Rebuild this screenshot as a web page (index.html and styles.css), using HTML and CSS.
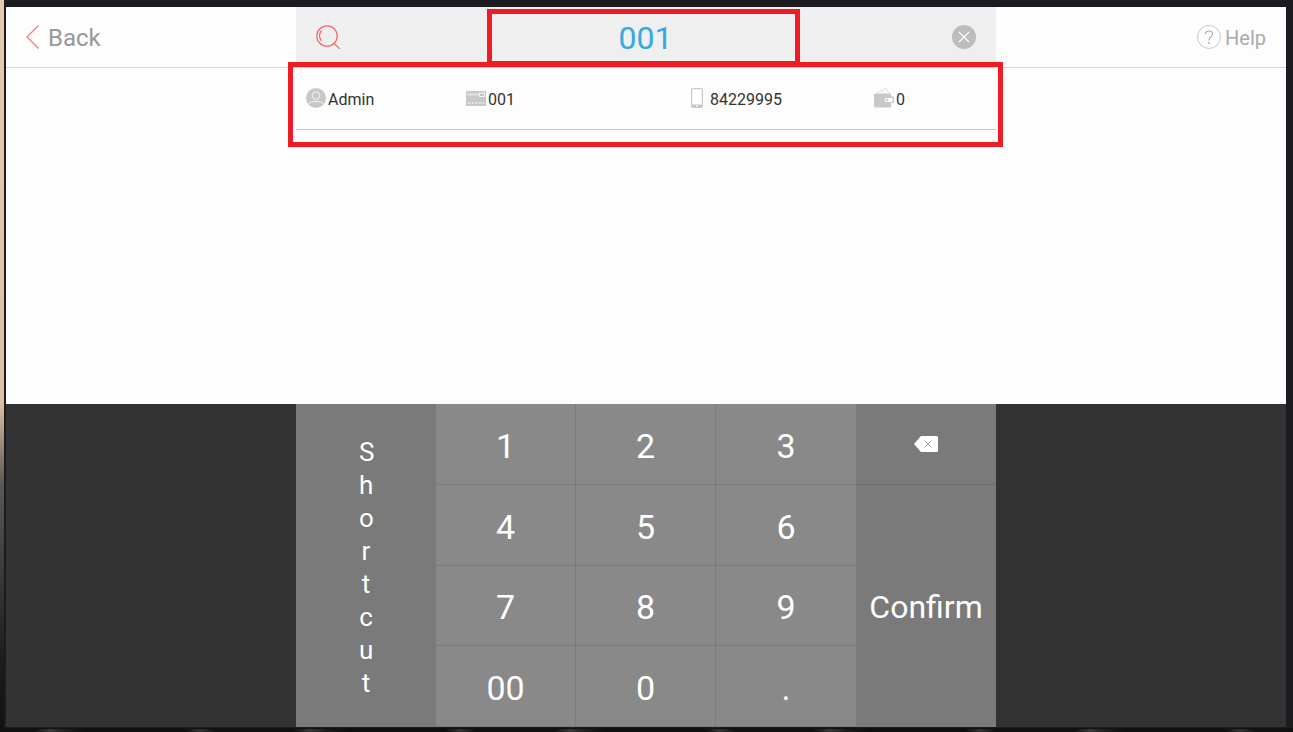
FILE: index.html
```html
<!DOCTYPE html>
<html lang="en">
<head>
    <meta charset="UTF-8">
    <title>Search Member</title>
    <link rel="stylesheet" href="styles.css">
</head>
<body>
    <div class="window">
        <header class="topbar">
            <a class="back">
                <svg class="back-icon" width="14" height="24" viewBox="0 0 14 24"><path d="M12.5 0.5 L1 12 L12.5 23.5" fill="none" stroke="#f4777b" stroke-width="1.2"/></svg>
                <span class="bar-label">Back</span>
            </a>
            <div class="search">
                <svg class="search-icon" width="24" height="24" viewBox="0 0 24 24" fill="none" stroke="#f4696e" stroke-width="1.2">
                    <circle cx="11" cy="11" r="10.2"/>
                    <path d="M5.5 5.5 A8 8 0 0 0 5.5 16"/>
                    <path d="M17.5 18 L24 24"/>
                </svg>
                <span class="search-value">001</span>
                <svg class="clear-icon" width="24" height="24" viewBox="0 0 24 24">
                    <circle cx="12" cy="12" r="12" fill="#bdbdbd"/>
                    <path d="M7 7 L17 17 M17 7 L7 17" stroke="#fff" stroke-width="1.1"/>
                </svg>
            </div>
            <a class="help">
                <svg width="24" height="24" viewBox="0 0 24 24" fill="none">
                    <circle cx="12" cy="12" r="11.5" stroke="#c8c8c8"/>
                    <path d="M8.5 9.2 C8.5 5 15.5 5 15.5 9.2 C15.5 12 12 12 12 15.5" stroke="#a8a8a8" stroke-width="1.1"/>
                    <circle cx="12" cy="18" r="0.9" fill="#a8a8a8"/>
                </svg>
                <span class="bar-label">Help</span>
            </a>
        </header>

        <main class="content">
            <div class="result">
                <div class="cell">
                    <svg width="20" height="20" viewBox="0 0 20 20">
                        <circle cx="10" cy="10" r="10" fill="#c8c8c8"/>
                        <circle cx="10" cy="7.6" r="3.8" fill="none" stroke="#f4f4f4" stroke-width="1"/>
                        <path d="M2.8 16.5 C4 12.2 16 12.2 17.2 16.5" fill="none" stroke="#f4f4f4" stroke-width="1"/>
                    </svg>
                    <span>Admin</span>
                </div>
                <div class="cell">
                    <svg width="20" height="15" viewBox="0 0 20 15">
                        <rect width="20" height="15" fill="#c8c8c8"/>
                        <path d="M1 3 H13 M1 4 H13" stroke="#f0f0f0" stroke-width="0.7"/>
                        <rect x="13.5" y="2" width="5" height="3.5" fill="none" stroke="#f4f4f4" stroke-width="0.9"/>
                        <path d="M2 12 H18" stroke="#fff" stroke-width="1" stroke-dasharray="2.2 1.4"/>
                    </svg>
                    <span>001</span>
                </div>
                <div class="cell cell-phone">
                    <svg width="12" height="20" viewBox="0 0 12 20">
                        <rect x="0.6" y="0.6" width="10.8" height="18.8" rx="1.5" fill="#fff" stroke="#c8c8c8" stroke-width="1.2"/>
                        <path d="M1 16.5 H11 V18 Q11 19.5 9.5 19.5 H2.5 Q1 19.5 1 18 Z" fill="#c8c8c8"/>
                        <path d="M5 18 H7" stroke="#fff"/>
                    </svg>
                    <span>84229995</span>
                </div>
                <div class="cell">
                    <svg width="20" height="20" viewBox="0 0 20 20">
                        <path d="M2 5.5 L12 0.5 L15 5" fill="none" stroke="#d0d0d0" stroke-width="0.7"/>
                        <path d="M1.5 5.5 H17 V8.5 H20 V15 H17 V19.5 H1.5 Q0 19.5 0 18 V7 Q0 5.5 1.5 5.5 Z" fill="#c8c8c8"/>
                        <rect x="10" y="9.5" width="9.5" height="5" rx="2.5" fill="#fff" stroke="#c8c8c8"/>
                        <circle cx="13" cy="12" r="1.2" fill="#c8c8c8"/>
                    </svg>
                    <span>0</span>
                </div>
            </div>
        </main>

        <section class="keyboard">
            <div class="keypad">
                <button class="key key-side key-shortcut"><span>Shortcut</span></button>
                <button class="key">1</button>
                <button class="key">2</button>
                <button class="key key-end">3</button>
                <button class="key key-side key-delete">
                    <svg width="24" height="16" viewBox="0 0 24 16">
                        <path d="M7 0 H22.5 Q24 0 24 1.5 V14.5 Q24 16 22.5 16 H7 L0 8 Z" fill="#fff"/>
                        <path d="M10.5 4.5 L17.5 11.5 M17.5 4.5 L10.5 11.5" stroke="#a0a0a0" stroke-width="1"/>
                    </svg>
                </button>
                <button class="key">4</button>
                <button class="key">5</button>
                <button class="key key-end">6</button>
                <button class="key key-side key-confirm">Confirm</button>
                <button class="key">7</button>
                <button class="key">8</button>
                <button class="key key-end">9</button>
                <button class="key">00</button>
                <button class="key">0</button>
                <button class="key key-end">.</button>
            </div>
        </section>

        <div class="mark mark-input"></div>
        <div class="mark mark-result"></div>
    </div>
</body>
</html>
```

FILE: styles.css
```css
*,
*::before,
*::after {
    box-sizing: border-box;
}
html, body {
    height: 100%;
}
body {
    margin: 0;
    overflow: hidden;
    padding-left: 4px;
    font-family: Roboto, "Liberation Sans", sans-serif;
    background:
        repeating-linear-gradient(90deg, #111 0 34px, #3a3a3a 50px, #1c1c1c 66px, #0d0d0d 90px 185px, #363636 200px, #111 215px 260px) left bottom / 100% 3px no-repeat,
        linear-gradient(180deg, #e6c9ad 0%, #dcbfa5 55%, #5d5853 66%, #1d1d1d 90%, #111 100%);
}
.window {
    position: relative;
    display: flex;
    flex-direction: column;
    width: 1289px;
    height: 728px;
    border-top: 7px solid #1c1b20;
    border-left: 2px solid #1c1b20;
    border-right: 7px solid #1c1b20;
    border-bottom: 1px solid #1c1b20;
    background-color: #fdfdfd;
}

/* top bar */
.topbar {
    display: flex;
    align-items: flex-start;
    height: 61px;
    border-bottom: 1px solid #d6d6d6;
    color: #999;
    font-size: 24px;
}
.bar-label {
    padding-top: 2px;
}
.back {
    display: flex;
    align-items: center;
    gap: 8px;
    width: 290px;
    height: 60px;
    padding-left: 20px;
}
.back-icon {
    flex-shrink: 0;
}
.search {
    display: flex;
    align-items: center;
    justify-content: space-between;
    width: 700px;
    height: 60px;
    padding: 0 20px;
    background-color: #efefef;
}
.search-value {
    margin-left: -1px;
    padding-top: 2px;
    color: #35a9e1;
    font-size: 32px;
}
.help {
    display: flex;
    align-items: center;
    justify-content: flex-end;
    gap: 4px;
    width: 290px;
    height: 60px;
    padding-right: 20px;
    color: #aaa;
    font-size: 20px;
}

/* member row */
.content {
    flex: 1;
    padding: 0 290px;
}
.result {
    display: grid;
    grid-template-columns: 160px 225px 183px 1fr;
    align-items: center;
    height: 62px;
    padding: 0 10px 1px;
    border-bottom: 1px solid #c8c8c8;
    color: #333;
    font-size: 16px;
}
.cell {
    display: flex;
    align-items: center;
    gap: 2px;
}
.cell span {
    padding-top: 2px;
}
.cell-phone {
    gap: 7px;
}

/* keypad */
.keyboard {
    height: 323px;
    background-color: #333;
}
.keypad {
    display: grid;
    grid-template-columns: repeat(5, 140px);
    grid-template-rows: repeat(4, 1fr);
    width: 700px;
    height: 100%;
    margin: 0 auto;
}
.key {
    padding: 4px 0 0;
    border: 0;
    border-right: 1px solid #7b7b7b;
    border-bottom: 1px solid #7b7b7b;
    background-color: #898989;
    color: #fff;
    font-family: inherit;
    font-size: 34px;
}
.key-end {
    border-right: 0;
}
.key-side {
    border-color: #6f6f6f;
    background-color: #7a7a7a;
}
.key-shortcut {
    grid-row: 1 / span 4;
    border: 0;
    font-size: 26px;
    line-height: 33px;
}
.key-shortcut span {
    display: block;
    width: 14px;
    margin: 0 auto;
    word-break: break-all;
}
.key-delete {
    grid-column: 5;
    grid-row: 1;
    padding: 0 0 7px;
    border-right: 0;
}
.key-confirm {
    grid-column: 5;
    grid-row: 2 / span 3;
    padding-top: 2px;
    border: 0;
    font-size: 32px;
}

/* red annotation boxes drawn over the screen */
.mark {
    position: absolute;
    border: 5px solid #ee1c25;
}
.mark-input {
    left: 481px;
    top: 2px;
    width: 313px;
    height: 57px;
}
.mark-result {
    left: 282px;
    top: 55px;
    width: 715px;
    height: 85px;
}
```
